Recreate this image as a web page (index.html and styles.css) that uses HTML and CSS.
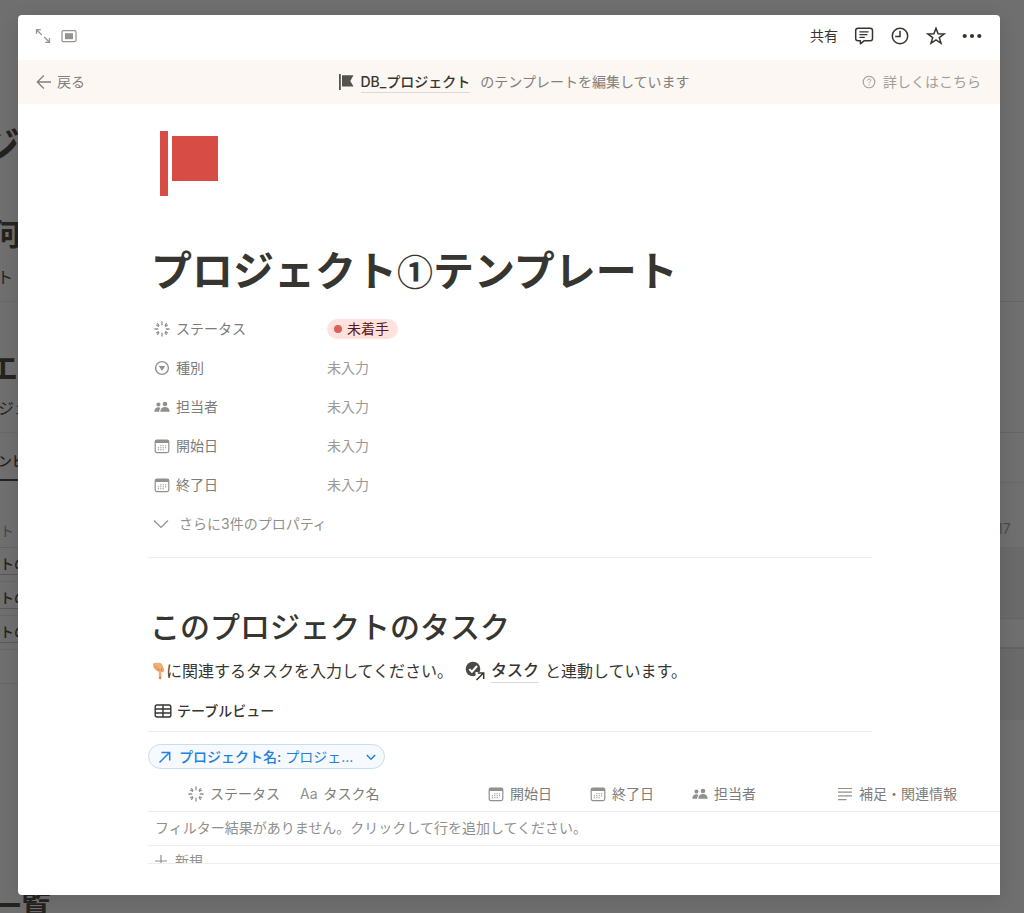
FILE: index.html
```html
<!DOCTYPE html>
<html lang="ja">
<head>
<meta charset="utf-8">
<title>プロジェクト①テンプレート</title>
<link rel="stylesheet" href="styles.css">
</head>
<body>
<svg class="defs" width="0" height="0" aria-hidden="true">
  <symbol id="i-status" viewBox="0 0 16 16"><g stroke="currentColor" stroke-width="1.3" stroke-linecap="round"><path d="M8 .9v2.9M8 12.2v2.9M.9 8h2.9M12.2 8h2.9M3.6 2.6l1.3 1.7M11.1 11.7l1.3 1.7M13.4 4.2l-1.8 1.1M4.4 10.7l-1.8 1.1M12.4 2.6l-1.3 1.7M4.9 11.7l-1.3 1.7M2.6 4.2l1.8 1.1M11.6 10.7l1.8 1.1"/></g></symbol>
  <symbol id="i-select" viewBox="0 0 16 16"><circle cx="8" cy="8" r="6.4" fill="none" stroke="currentColor" stroke-width="1.4"/><path d="M4.9 6h6.2L8 11z" fill="currentColor"/></symbol>
  <symbol id="i-people" viewBox="0 0 16 16"><g fill="currentColor"><circle cx="4.4" cy="5.4" r="2"/><circle cx="11" cy="5" r="2.3"/><path d="M.3 12.8c0-2.9 1.7-4.5 4.1-4.5.9 0 1.600.2 2.200.6C5.600 9.900 5.200 11.200 5.200 12.800zM6.300 12.800c0-3 1.900-4.700 4.700-4.700s4.700 1.700 4.700 4.700z"/></g></symbol>
  <symbol id="i-date" viewBox="0 0 16 16"><rect x="1.200" y="2" width="13.600" height="12.600" rx="1.800" fill="none" stroke="currentColor" stroke-width="1.200"/><path d="M1.200 5V3.500Q1.200 2 2.800 2h10.400q1.600 0 1.600 1.500V5z" fill="currentColor"/><path d="M6.200 7.800h6M3.800 9.800h8.400M3.800 11.800h6.400" stroke="currentColor" stroke-width="1.100" stroke-dasharray="1.200 1.200"/></symbol>
  <symbol id="i-text" viewBox="0 0 16 16"><path d="M1 2.500h14M1 6.200h14M1 9.900h14M1 13.600h8.500" stroke="currentColor" stroke-width="1.200"/></symbol>
</svg>

<div class="backdrop" aria-hidden="true">
  <div class="behind-left">
    <p class="b-title">ジ</p>
    <p class="b-heading b-what">何</p>
    <p class="b-text b-first">ト</p>
    <p class="b-heading b-ex">エ</p>
    <p class="b-text b-second">ジェ</p>
    <p class="b-tab">ンビ</p>
    <p class="b-head">ト</p>
    <p class="b-row"><span>トの</span></p>
    <p class="b-row"><span>トの</span></p>
    <p class="b-row"><span>トの</span></p>
    <p class="b-row"></p>
    <p class="b-heading b-list">一覧</p>
  </div>
  <div class="behind-right">
    <div class="r-one"></div>
    <div class="r-two"></div>
    <div class="r-three"></div>
    <div class="r-four">17</div>
    <div class="r-five"></div>
    <div class="r-six"></div>
    <div class="r-seven"></div>
  </div>
</div>

<div class="modal" role="dialog" aria-label="プロジェクト①テンプレート">
  <header class="toolbar">
    <button class="icon-btn faint" aria-label="全画面で開く"><svg width="16" height="16" viewBox="0 0 16 16" fill="none" stroke="currentColor" stroke-width="1.300"><path d="M1.500 6V1.700h4.300M1.800 2l5 5M14.500 10v4.300h-4.300M14.200 14l-5-5"/></svg></button>
    <button class="icon-btn faint" aria-label="表示を切り替え"><svg width="16" height="16" viewBox="0 0 16 16"><rect x="1" y="2.700" width="14" height="11" rx="1.500" fill="none" stroke="currentColor" stroke-width="1.300"/><rect x="4" y="5.200" width="8" height="6" fill="currentColor"/></svg></button>
    <span class="spacer"></span>
    <button class="share">共有</button>
    <button class="icon-btn" aria-label="コメント"><svg width="20" height="20" viewBox="0 0 20 20" fill="none" stroke="currentColor" stroke-width="1.500" stroke-linejoin="round"><path d="M4 2.200h12.200q2.300 0 2.300 2.300v8q0 2.300-2.300 2.300H10l-3.600 3v-3H4q-2.300 0-2.300-2.300v-8Q1.700 2.200 4 2.200z"/><path d="M5.400 5.900h9.200M5.400 8.600h8M5.400 11.300h5.400" stroke-width="1.200"/></svg></button>
    <button class="icon-btn" aria-label="更新履歴"><svg width="20" height="20" viewBox="0 0 20 20" fill="none" stroke="currentColor" stroke-width="1.500"><circle cx="10" cy="10" r="7.700"/><path d="M10 4.800V10.500H5.200"/></svg></button>
    <button class="icon-btn" aria-label="お気に入り"><svg width="20" height="20" viewBox="0 0 20 20" fill="none" stroke="currentColor" stroke-width="1.500" stroke-linejoin="miter"><path d="M10 2.300l2.100 5.500 5.900.2-4.700 3.600 1.700 5.700-5-3.400-5 3.400 1.700-5.700L2 8l5.900-.2z"/></svg></button>
    <button class="icon-btn" aria-label="その他"><svg width="20" height="20" viewBox="0 0 20 20" fill="currentColor"><circle cx="2.700" cy="10" r="2.100"/><circle cx="10" cy="10" r="2.100"/><circle cx="17.300" cy="10" r="2.100"/></svg></button>
  </header>

  <div class="banner">
    <button class="back"><svg width="16" height="16" viewBox="0 0 16 16" fill="none" stroke="currentColor" stroke-width="1.300"><path d="M15 8H1.500M7.800 1.500L1.300 8l6.500 6.500"/></svg>戻る</button>
    <p class="editing"><svg width="16" height="18" viewBox="0 0 16 18" fill="#55534e"><path d="M1 1h1.800v16H1zM4 2.200h11.500L12.300 7.900l3.200 5.600H4z"/></svg><a href="#">DB_プロジェクト</a><span>のテンプレートを編集しています</span></p>
    <button class="help"><svg width="14" height="14" viewBox="0 0 14 14" fill="none" stroke="currentColor"><circle cx="7" cy="7" r="5.800" stroke-width="1.100"/><path d="M5.300 5.700c0-2.200 3.400-2.200 3.400-.1C8.700 6.900 7 6.800 7 8.300M7 9.300v1.100" stroke-width="1"/></svg>詳しくはこちら</button>
  </div>

  <main class="page">
    <svg class="flag" width="60" height="66" viewBox="0 0 60 66" fill="#d84c46" role="img" aria-label="旗"><path d="M0 0h8v65H0zM12 5h46v45H12z"/></svg>
    <h1>プロジェクト<span>①</span>テンプレート</h1>

    <dl class="props">
      <div><dt><svg width="16" height="16"><use href="#i-status"/></svg>ステータス</dt><dd><span class="tag">未着手</span></dd></div>
      <div><dt><svg width="16" height="16"><use href="#i-select"/></svg>種別</dt><dd>未入力</dd></div>
      <div><dt><svg width="16" height="16"><use href="#i-people"/></svg>担当者</dt><dd>未入力</dd></div>
      <div><dt><svg width="16" height="16"><use href="#i-date"/></svg>開始日</dt><dd>未入力</dd></div>
      <div><dt><svg width="16" height="16"><use href="#i-date"/></svg>終了日</dt><dd>未入力</dd></div>
    </dl>
    <button class="more"><svg width="16" height="16" viewBox="0 0 16 16" fill="none" stroke="currentColor" stroke-width="1.200"><path d="M1 4.500l7 7 7-7"/></svg>さらに3件のプロパティ</button>

    <section class="tasks">
      <h2>このプロジェクトのタスク</h2>
      <p class="note"><svg class="hand" width="14" height="18" viewBox="0 0 14 18" role="img" aria-label="下"><path d="M1 2.500Q1.300.8 3 .8h4.500q2 .2 2.800 2l1.900 4.400q.8 2.300-.8 2.800-1 .5-1.900-.3l-.1 6q-.2 1.500-1.300 1.500T6.800 15.700V9.500Q5.300 9.800 4.600 8.300 2.900 8.200 2.500 6.500.6 5.500 1 2.500z" fill="#eeaf77"/><path d="M2.800 6.200L4.600 4M4.800 8.200L6 5.800M6.900 9.400V6.800M9.400 9.500V6.300" fill="none" stroke="#cf7b4c" stroke-width=".8"/><path d="M7.300 14.800h1.500v1.900H7.300z" fill="#e25f48"/></svg>に関連するタスクを入力してください。<svg class="check" width="20" height="20" viewBox="0 0 20 20"><circle cx="8" cy="8" r="7.300" fill="#4b4a46"/><path d="M4.300 8.100l2.600 2.700L12 5" fill="none" stroke="#fff" stroke-width="2"/><path d="M10.500 11h9v9h-9z" fill="#fff"/><path d="M11.500 19l7-7M12.800 12h5.900v5.900" fill="none" stroke="#37352f" stroke-width="1.500"/></svg><a href="#">タスク</a><span>と連動しています。</span></p>
      <div class="tabs"><button class="tab"><svg width="18" height="16" viewBox="0 0 18 16" fill="none" stroke="currentColor" stroke-width="1.400"><rect x="1.200" y="2" width="15.600" height="12" rx="1.800"/><path d="M1.200 6h15.600M1.200 10h15.600M9 2v12"/></svg>テーブルビュー</button></div>
      <button class="filter"><svg width="16" height="16" viewBox="0 0 16 16" fill="none" stroke="currentColor" stroke-width="1.500"><path d="M2.500 13.500L12.500 3.500M4.500 3.500h8.200v8"/></svg><span><b>プロジェクト名:</b> プロジェ...</span><svg width="10" height="10" viewBox="0 0 10 10" fill="none" stroke="currentColor" stroke-width="1.500"><path d="M.8 3L5 7.200 9.200 3"/></svg></button>
    </section>

    <div class="table-wrap">
      <table>
        <colgroup><col class="c-status"><col class="c-name"><col class="c-date"><col class="c-date"><col class="c-people"><col></colgroup>
        <thead><tr>
          <th class="first"><span><svg width="16" height="16"><use href="#i-status"/></svg>ステータス</span></th>
          <th><span><i>Aa</i>タスク名</span></th>
          <th><span><svg width="16" height="16"><use href="#i-date"/></svg>開始日</span></th>
          <th><span><svg width="16" height="16"><use href="#i-date"/></svg>終了日</span></th>
          <th><span><svg width="16" height="16"><use href="#i-people"/></svg>担当者</span></th>
          <th><span><svg width="16" height="16"><use href="#i-text"/></svg>補足・関連情報</span></th>
        </tr></thead>
        <tbody><tr><td colspan="6">フィルター結果がありません。クリックして行を追加してください。</td></tr></tbody>
      </table>
      <button class="add"><svg width="12" height="12" viewBox="0 0 12 12" stroke="currentColor" stroke-width="1.200"><path d="M6 0v12M0 6h12"/></svg>新規</button>
    </div>
  </main>
</div>
</body>
</html>
```
FILE: styles.css
```css
* { box-sizing: border-box; }

body {
  position: relative;
  margin: 0;
  padding: 15px 24px 18px 18px;
  background: #6f6f6f;
  color: #37352f;
  font: 14px/20px Inter, "Noto Sans CJK JP", sans-serif;
  overflow: hidden;
}

h1, h2, p, dl, dd { margin: 0; }
svg { flex: none; }
.defs { position: absolute; }

button {
  display: flex;
  align-items: center;
  padding: 0;
  border: 0;
  background: none;
  color: inherit;
  font: inherit;
  cursor: pointer;
}

/* Dimmed page behind the dialog */
.backdrop {
  position: absolute;
  inset: 0;
  display: flex;
  justify-content: space-between;
  overflow: hidden;
  color: #24231f;
}
.behind-left { width: 18px; white-space: nowrap; }
.behind-right { width: 24px; }
.b-title { margin-top: 115px; text-indent: -20px; font-size: 40px; line-height: 64px; height: 60px; font-weight: 700; }
.b-heading { text-indent: -12px; font-size: 30px; line-height: 60px; font-weight: 700; }
.b-what { margin-top: 29px; text-indent: -9px; }
.b-text { font-size: 16px; }
.b-first { height: 38px; text-indent: -3px; line-height: 26px; border-bottom: 1px solid #686868; }
.b-ex { margin-top: 36px; }
.b-second { height: 35px; text-indent: -2px; border-bottom: 1px solid #686868; }
.b-tab { margin-top: 10px; text-indent: -2px; font-weight: 500; line-height: 36px; border-bottom: 2px solid #24231f; }
.b-head { margin-top: 34px; line-height: 32px; color: #44433f; border-bottom: 1px solid #626262; }
.b-row { height: 34px; padding-top: 6px; font-weight: 500; border-bottom: 1px solid #666; }
.b-row span { display: block; border-bottom: 1px solid #595959; }
.b-list { margin-top: 191px; text-indent: -9px; }

.r-one { height: 302px; border-bottom: 1px solid #656565; }
.r-two { height: 131px; border-bottom: 1px solid #656565; }
.r-three { height: 50px; border-bottom: 1px solid #686868; }
.r-four { height: 64px; padding-top: 36px; color: #4b4b4b; text-indent: -3px; }
.r-five { height: 72px; background: #6a6a6a; border-bottom: 1px solid #636363; }
.r-six { height: 30px; border-bottom: 2px solid #626262; }
.r-seven { height: 71px; background: #6a6a6a; }

.modal {
  position: relative;
  overflow: hidden;
  background: #fff;
  border-radius: 4px 4px 0 4px;
  box-shadow: 0 4px 18px rgba(0, 0, 0, .12);
}

.toolbar {
  display: flex;
  align-items: center;
  gap: 16px;
  height: 45px;
  padding: 0 18px 3px 17px;
}
.toolbar .faint { color: #969591; }
.toolbar .faint + .faint { margin-left: -6px; }
.spacer { flex: 1; }

.banner {
  display: grid;
  grid-template-columns: 1fr auto 1fr;
  align-items: center;
  height: 44px;
  padding: 0 19px 0 18px;
  background: #fcf7f2;
  color: #81807b;
}
.back { gap: 5px; }
.help { gap: 7px; justify-self: end; color: #a09e9a; }
.editing { display: flex; align-items: center; gap: 7px; padding-left: 10px; }
.editing span { margin-left: 3px; }
a {
  color: #37352f;
  font-weight: 500;
  text-decoration: none;
  border-bottom: 1px solid #dad9d6;
}

.page { padding: 27px 0 31px 130px; }
.flag { display: block; margin-left: 12px; }
h1 { margin: 44px 128px 0 3px; font-size: 41px; line-height: 60px; font-weight: 700; }
h1 span { font-family: "Noto Sans CJK JP", sans-serif; font-size: 36px; line-height: 36px; }

.props { margin-top: 8px; }
.props div { display: flex; height: 39px; align-items: center; }
.props dt { display: flex; align-items: center; gap: 6px; width: 179px; padding-left: 6px; color: #7d7c78; }
.props dt svg { color: #91908c; }
.props dd { color: #9b9a97; }
.tag {
  display: flex;
  align-items: center;
  gap: 5px;
  padding: 0 9px 0 7px;
  border-radius: 10px;
  background: #ffe2dd;
  color: #5d1715;
}
.tag::before { content: ""; width: 8px; height: 8px; border-radius: 50%; background: #dc6259; }
.more { gap: 10px; height: 39px; padding-left: 5px; color: #91908c; }

.tasks { margin: 14px 128px 0 0; border-top: 1px solid #eeedec; }
h2 { margin-top: 47px; padding-left: 2px; font-size: 30px; line-height: 44px; font-weight: 500; }
.note { display: flex; align-items: center; margin-top: 9px; padding-left: 4px; font-size: 16px; line-height: 24px; }
.hand { margin: 0; }
.check { margin: 0 6px 0 12px; }
.note span { margin-left: 6px; }
.tabs { margin-top: 8px; height: 41px; border-bottom: 1px solid #eeedec; }
.tab { gap: 5px; height: 40px; padding-left: 6px; font-weight: 500; }
.filter {
  gap: 6px;
  height: 25px;
  margin-top: 12px;
  padding: 0 8px;
  border: 1px solid #c5def5;
  border-radius: 13px;
  background: #f6fafe;
  color: #2380dc;
}
.filter b { font-weight: 500; }
.filter svg:last-child { margin-left: 7px; }

.table-wrap { height: 95px; overflow: hidden; border-bottom: 1px solid #eeeeed; }
table { width: 100%; table-layout: fixed; border-collapse: collapse; }
.c-status { width: 152px; }
.c-name { width: 188px; }
.c-date { width: 102px; }
.c-people { width: 145px; }
th { height: 42px; padding: 8px 0 0; color: #7d7c78; font-weight: 400; border-bottom: 1px solid #e9e9e7; }
th span { display: flex; align-items: center; gap: 6px; white-space: nowrap; }
th svg { color: #91908c; }
th i { font-style: normal; color: #91908c; }
.first { padding-left: 40px; }
td { height: 34px; padding: 0 0 0 7px; color: #91908c; border-bottom: 1px solid #eeeeed; }
.add { gap: 8px; height: 30px; padding-left: 7px; color: #91908c; }
```
